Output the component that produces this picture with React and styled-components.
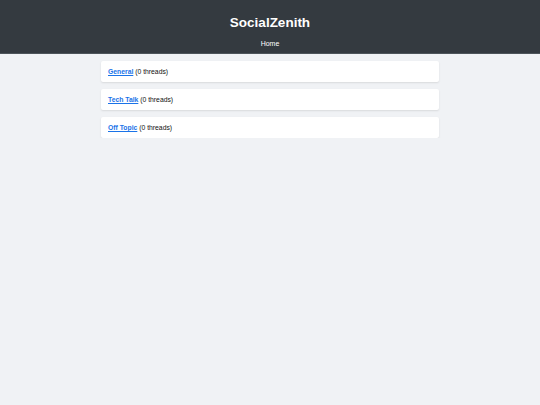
import styled, { createGlobalStyle } from 'styled-components';

const GlobalStyle = createGlobalStyle`
    html, body {
        margin: 0;
        padding: 0;
        background: #f0f2f5;
        font-family: "Liberation Sans", Arial, sans-serif;
        color: #222;
    }
`;

const forums = [
    { name: 'General', threads: 0 },
    { name: 'Tech Talk', threads: 0 },
    { name: 'Off Topic', threads: 0 },
];

function App() {
    return (
        <>
            <GlobalStyle />
            <Header>
                <h1>SocialZenith</h1>
                <nav>
                    <a href="#">Home</a>
                </nav>
            </Header>
            <Main>
                {forums.map((f) => (
                    <ForumCard key={f.name}>
                        <a href="#">{f.name}</a> ({f.threads} threads)
                    </ForumCard>
                ))}
            </Main>
        </>
    );
}

const Header = styled.header`
    background: #343a40;
    color: white;
    text-align: center;
    padding: 15px 0 5px;
    border-bottom: 1px solid #4d545a;
    h1 {
        margin: 0 0 9px;
        font-size: 13.5px;
        line-height: 16px;
        font-weight: bold;
    }
    nav {
        font-size: 7px;
        line-height: 8px;
        a {
            color: white;
            text-decoration: none;
        }
    }
`;

const Main = styled.main`
    width: 338px;
    margin: 0 auto;
    padding-top: 7px;
    display: flex;
    flex-direction: column;
    gap: 7px;
`;

const ForumCard = styled.div`
    background: white;
    height: 21px;
    box-sizing: border-box;
    padding: 0 7px;
    display: flex;
    align-items: center;
    white-space: pre;
    font-size: 6.8px;
    color: #111;
    border-radius: 2px;
    box-shadow: 0 1px 2px rgba(0, 0, 0, 0.1);
    a {
        color: #1a73e8;
        font-weight: bold;
        text-decoration: underline;
    }
`;

export default App;
